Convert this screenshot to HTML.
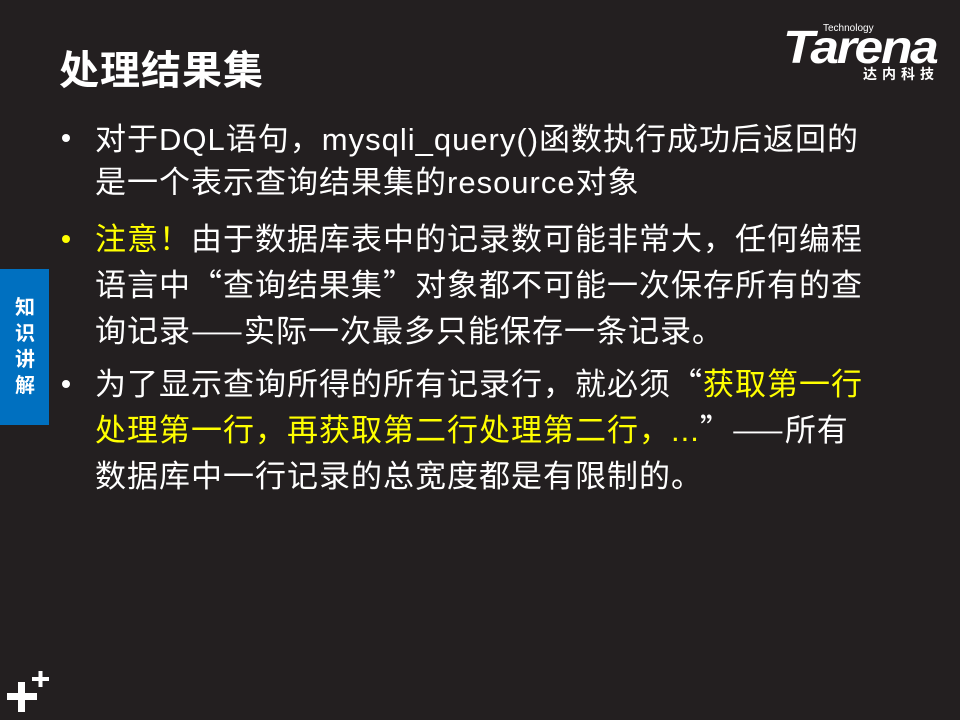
<!DOCTYPE html>
<html><head><meta charset="utf-8"><style>
html,body{margin:0;padding:0}
body{width:960px;height:720px;background:#231f20;position:relative;overflow:hidden;font-family:"Liberation Sans","Noto Sans CJK SC",sans-serif;color:#fff}
.title{position:absolute;left:59px;top:38px;font-size:40px;font-weight:bold;letter-spacing:1px}
.tab{position:absolute;left:0;top:269px;width:49px;height:156px;background:#0070c0}
.tab div{position:absolute;left:13px;top:26px;width:24px;font-size:20px;font-weight:bold;line-height:26px;text-align:center}
.l{position:absolute;left:95px;font-size:31px;white-space:nowrap;line-height:46px;letter-spacing:1px}
.c{font-family:"Noto Sans CJK SC",sans-serif}
.b{position:absolute;left:62px;width:8px;height:8px;border-radius:50%;background:#fff}
.y{color:#ffff00}
.logo{position:absolute;left:783px;top:18px;width:165px;height:65px}
</style></head><body>
<div class="title">处理结果集</div>
<div class="logo">
<div style="position:absolute;left:40px;top:5px;font-size:10px;color:#fff">Technology</div>
<div style="position:absolute;left:0;top:8px;font-size:46px;font-weight:900;font-style:italic;letter-spacing:-2px;line-height:42px;transform:scaleX(1.12);transform-origin:left">Tarena</div>
<div style="position:absolute;left:80px;top:46px;font-size:14px;font-weight:bold;letter-spacing:5px">达内科技</div>
</div>
<div class="tab"><div>知识讲解</div></div>

<div class="b" style="top:134px"></div>
<div class="l" style="top:114px">对于DQL语句<span class="c">，</span>mysqli_query()函数执行成功后返回的</div>
<div class="l" style="top:160px">是一个表示查询结果集的resource对象</div>
<div class="b y" style="top:235px;background:#ffff00"></div>
<div class="l" style="top:214px"><span class="y">注意<span class="c">！</span></span>由于数据库表中的记录数可能非常大<span class="c">，</span>任何编程</div>
<div class="l" style="top:260px">语言中<span class="c">“</span>查询结果集<span class="c">”</span>对象都不可能一次保存所有的查</div>
<div class="l" style="top:306px">询记录<span class="c">——</span>实际一次最多只能保存一条记录<span class="c">。</span></div>
<div class="b" style="top:380px"></div>
<div class="l" style="top:359px">为了显示查询所得的所有记录行<span class="c">，</span>就必须<span class="c">“</span><span class="y">获取第一行</span></div>
<div class="l" style="top:405px"><span class="y">处理第一行<span class="c">，</span>再获取第二行处理第二行<span class="c">，</span>...</span><span class="c">”——</span>所有</div>
<div class="l" style="top:451px">数据库中一行记录的总宽度都是有限制的<span class="c">。</span></div>

<svg style="position:absolute;left:0;top:660px" width="60" height="60">
<rect x="7" y="33" width="30" height="7" fill="#fff"/>
<rect x="18" y="22" width="7" height="30" fill="#fff"/>
<rect x="32" y="17" width="17" height="4" fill="#fff"/>
<rect x="38.5" y="11" width="4" height="16" fill="#fff"/>
</svg>
</body></html>
